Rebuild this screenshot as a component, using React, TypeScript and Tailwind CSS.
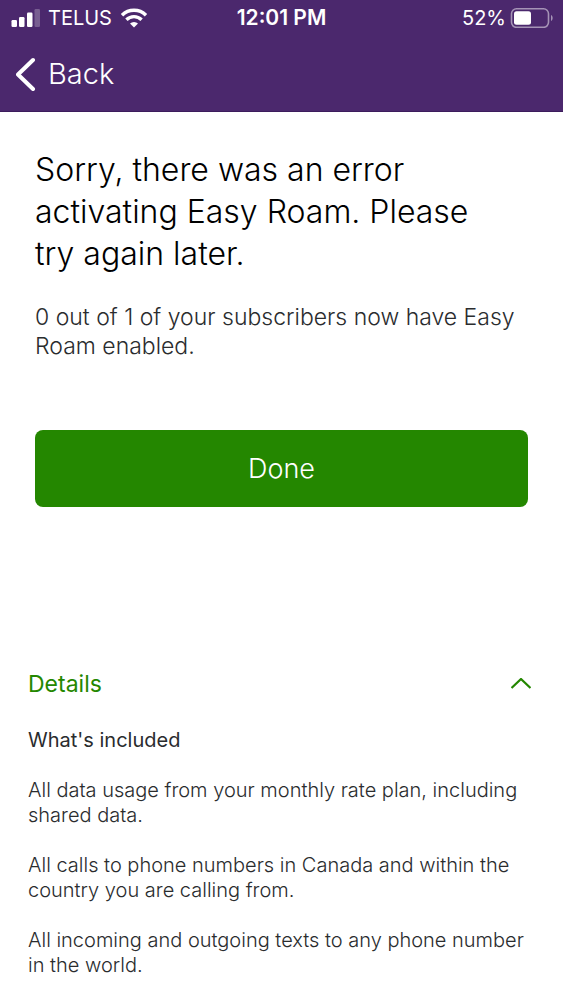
import { useState } from "react";

const included = [
  "All data usage from your monthly rate plan, including shared data.",
  "All calls to phone numbers in Canada and within the country you are calling from.",
  "All incoming and outgoing texts to any phone number in the world.",
];

function StatusBar() {
  return (
    <div className="grid h-9 grid-cols-[1fr_auto_1fr] items-center px-2.5 text-xl font-normal">
      <div className="flex items-center gap-2">
        <svg className="h-5 w-[30px]" viewBox="0 0 30 20" fill="currentColor" aria-hidden="true">
          <rect x="1.500" y="12" width="5.500" height="7" rx="1.200" />
          <rect x="9" y="9" width="5.500" height="10" rx="1.200" />
          <rect x="17" y="4.500" width="5.500" height="14.500" rx="1.200" />
          <rect x="24.500" y="1" width="5.500" height="18" rx="1.200" opacity=".25" />
        </svg>
        <span>TELUS</span>
        <svg className="h-5 w-7" viewBox="0 0 28 20" fill="none" stroke="currentColor" strokeWidth="3.400" aria-hidden="true">
          <path d="M2 7.200a17.200 17.200 0 0 1 24 0M6.400 11.700a11 11 0 0 1 15.200 0" />
          <path d="M14 19.500l-4-4a5.800 5.800 0 0 1 8 0z" fill="currentColor" stroke="none" />
        </svg>
      </div>
      <div className="text-[21px] font-semibold">12:01 PM</div>
      <div className="flex items-center justify-end gap-1">
        <span>52%</span>
        <svg className="h-5 w-[43px]" viewBox="0 0 43 20" fill="none" aria-hidden="true">
          <rect x="1.500" y=".8" width="37" height="18.500" rx="5" stroke="#a593b6" strokeWidth="1.600" />
          <rect x="4" y="3.300" width="17" height="13.500" rx="2.500" fill="white" />
          <path d="M41 7c2.200 1 2.200 5 0 6z" fill="#a593b6" />
        </svg>
      </div>
    </div>
  );
}

export default function App() {
  const [open, setOpen] = useState(true);

  return (
    <div className="min-h-screen bg-white font-['Inter','Liberation_Sans',sans-serif] font-light text-[#2a2c2e]">
      <header className="border-b border-[#3c1c5c] bg-[#4b286d] text-white">
        <StatusBar />
        <nav className="flex h-[75px] items-center px-4">
          <button type="button" className="flex items-center gap-3 text-[29px]">
            <svg className="h-9 w-5" viewBox="0 0 20 36" fill="none" stroke="currentColor" strokeWidth="4" strokeLinecap="round" strokeLinejoin="round" aria-hidden="true">
              <path d="M17 4L2 18.500l15 14.500" />
            </svg>
            Back
          </button>
        </nav>
      </header>
      <main>
        <section className="px-[35px] pt-[37px]">
          <h1 className="pr-5 text-[32px] leading-[42px] text-black">
            Sorry, there was an error activating Easy Roam. Please try again later.
          </h1>
          <p className="mt-7 text-[23px] leading-[29px]">
            0 out of 1 of your subscribers now have Easy Roam enabled.
          </p>
          <button type="button" className="mt-[69px] h-[77px] w-full rounded-lg bg-[#248700] pt-0.5 text-[27px] text-white">
            Done
          </button>
        </section>
        <section className="px-7 pt-[161px] pb-6">
          <h2>
            <button
              type="button"
              aria-expanded={open}
              aria-controls="details"
              onClick={() => setOpen(!open)}
              className="flex w-full items-center justify-between pr-1 text-[23px] leading-8 font-normal text-[#248700]"
            >
              Details
              <svg className={open ? "h-3 w-5" : "h-3 w-5 rotate-180"} viewBox="0 0 20 12" fill="none" stroke="currentColor" strokeWidth="2.300" strokeLinejoin="round" aria-hidden="true">
                <path d="M.5 10L10 1l9.500 9" />
              </svg>
            </button>
          </h2>
          {open && (
            <div id="details" className="mt-7 flex flex-col gap-[25px] text-xl leading-[25px]">
              <h3 className="font-normal">What's included</h3>
              {included.map((text) => (
                <p key={text}>{text}</p>
              ))}
            </div>
          )}
        </section>
      </main>
    </div>
  );
}
